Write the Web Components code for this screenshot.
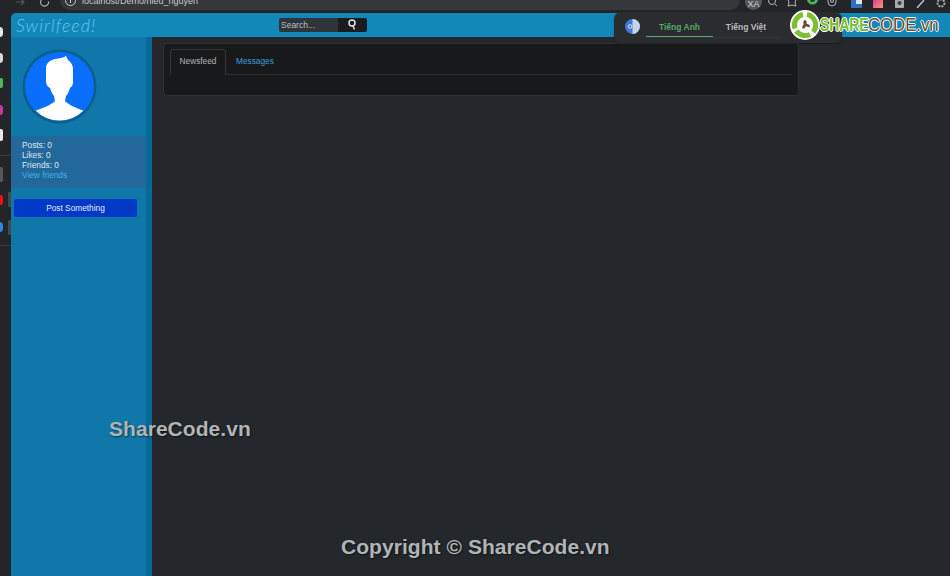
<!DOCTYPE html>
<html>
<head>
<meta charset="utf-8">
<title>Swirlfeed</title>
<style>
  html, body { margin: 0; height: 100%; overflow: hidden; background: #24282c; }
  body { font-family: "Liberation Sans", Arial, sans-serif; }
  .frame { display: grid; grid-template-rows: 13px 1fr; grid-template-columns: 11px 1fr; height: 576px; position: relative; }
  browser-bar { grid-column: 1 / 3; }
</style>
</head>
<body>
<div class="frame">
  <browser-bar></browser-bar>
  <side-rail></side-rail>
  <swirl-app>
    <user-card slot="side" posts="0" likes="0" friends="0"></user-card>
    <feed-tabs slot="main"></feed-tabs>
  </swirl-app>
  <translate-popup></translate-popup>
  <share-logo></share-logo>
  <water-mark style="left:109px;top:417px">ShareCode.vn</water-mark>
  <water-mark style="left:341px;top:535px">Copyright © ShareCode.vn</water-mark>
</div>

<script>
class BrowserBar extends HTMLElement {
  constructor() {
    super();
    this.attachShadow({ mode: 'open' }).innerHTML = `
      <style>
        :host { display: block; height: 13px; background: #232528; overflow: hidden; position: relative; }
        .bar { display: flex; align-items: flex-start; height: 13px; }
        .nav { display: flex; gap: 15px; margin: 0 0 0 15px; width: 45px; flex: none; align-items: center; }
        .url { width: 680px; height: 20px; margin-top: -10px; background: #35373b; border-radius: 10px;
               color: #c8cacc; font-size: 9px; display: flex; align-items: center; padding: 1px 0 0 5px; box-sizing: border-box; flex: none; }
        .url svg { margin-right: 6px; }
        .tools { position: absolute; top: -3px; left: 745px; display: flex; align-items: center; }
        .xa { width: 17px; height: 13px; background: #54565a; border-radius: 0 0 9px 9px; color: #d0d0d0; font-size: 9px; text-align: center; line-height: 14px; margin-right: 6px; }
        .i { display: block; flex: none; }
      </style>
      <div class="bar">
        <div class="nav">
          <svg class="i" width="10" height="8" viewBox="0 0 10 8" fill="none" stroke="#55585c" stroke-width="1.2"><path d="M1 2h8M6 -1l3 3-3 3"/></svg>
          <svg class="i" width="10" height="8" viewBox="0 0 10 8" fill="none" stroke="#b4b6b8" stroke-width="1.1"><path d="M8.500 1.500A4 4 0 1 1 7 -1"/></svg>
        </div>
        <div class="url">
          <svg width="11" height="11" viewBox="0 0 11 11" fill="none" stroke="#c8cacc"><circle cx="5.500" cy="5.500" r="5"/><path d="M5.500 5v3"/></svg>
          <span>localhost/Demo/hieu_nguyen</span>
        </div>
      </div>
      <div class="tools">
        <div class="xa">XA</div>
        <svg class="i" style="margin-right:9px" width="10" height="9" viewBox="0 0 10 9" fill="none" stroke="#b4b6b8"><circle cx="4" cy="2" r="3.500"/><path d="M7 5l2 2"/></svg>
        <svg class="i" style="margin-right:10px" width="10" height="9" viewBox="0 0 10 9" fill="none" stroke="#b4b6b8"><path d="M1 0l1 4-1 3 4-1 4 1-1-3 1-4"/></svg>
        <svg class="i" style="margin-right:9px" width="11" height="9" viewBox="0 0 11 9"><path d="M0 0h11a5.500 5.500 0 0 1-11 0z" fill="#4fb55a"/><path d="M3 0h5a2.500 3 0 0 1-5 0z" fill="#2a2c2f"/></svg>
        <svg class="i" style="margin-right:14px" width="10" height="9" viewBox="0 0 10 9" fill="none" stroke="#b4b6b8"><path d="M1 0v3a4 4 0 0 0 8 0V0"/><circle cx="5" cy="2" r="1.500"/></svg>
        <svg class="i" style="margin-right:11px" width="11" height="9" viewBox="0 0 11 9"><rect width="11" height="9" fill="#2f6fc0"/><rect x="5" width="6" height="5" fill="#d8e4f2"/></svg>
        <svg class="i" style="margin-right:12px" width="10" height="9" viewBox="0 0 10 9"><defs><linearGradient id="g" x1="0" y1="0" x2="1" y2="1"><stop offset="0" stop-color="#e0359a"/><stop offset="1" stop-color="#f59a6a"/></linearGradient></defs><rect width="10" height="9" fill="url(#g)"/></svg>
        <svg class="i" style="margin-right:12px" width="9" height="9" viewBox="0 0 9 9"><rect width="9" height="9" rx="1" fill="#a8aaad"/><circle cx="4.500" cy="4" r="2" fill="#3a3c40"/></svg>
        <svg class="i" style="margin-right:10px" width="10" height="9" viewBox="0 0 10 9" fill="none" stroke="#b8c0d8" stroke-width="1.500"><path d="M1 9L8 1"/></svg>
        <svg class="i" width="10" height="9" viewBox="0 0 10 9"><circle cx="5" cy="4" r="3.500" fill="none" stroke="#a8aaad" stroke-width="2" stroke-dasharray="2 1"/></svg>
      </div>`;
  }
}
customElements.define('browser-bar', BrowserBar);

class SideRail extends HTMLElement {
  constructor() {
    super();
    // top, height, colour, radius of the clipped extension icons
    const spots = [
      [14, 10, '#e8e8e8', 4], [40, 10, '#d8d8d8', 4], [65, 10, '#4fb55a', 2], [92, 10, '#c23aa0', 5],
      [116, 12, '#e8e8e8', 2], [154, 15, '#55575a', 2], [182, 10, '#e01010', 2], [209, 10, '#2a86e0', 5]
    ];
    this.attachShadow({ mode: 'open' }).innerHTML = `
      <style>
        :host { display: block; background: #232528; position: relative; overflow: hidden; }
        b { position: absolute; left: -4px; width: 7px; }
        i { position: absolute; left: 0; right: 0; height: 1px; background: #3a3c3f; }
        u { position: absolute; left: 8px; width: 3px; height: 15px; background: #46484b; border-radius: 1px 0 0 1px; }
      </style>
      ${spots.map(s => `<b style="top:${s[0]}px;height:${s[1]}px;background:${s[2]};border-radius:${s[3]}px"></b>`).join('')}
      <i style="top:142px"></i><i style="top:232px"></i>
      <u style="top:179px"></u><u style="top:207px"></u>`;
  }
}
customElements.define('side-rail', SideRail);

class SwirlApp extends HTMLElement {
  constructor() {
    super();
    this.attachShadow({ mode: 'open' }).innerHTML = `
      <style>
        :host { display: grid; grid-template-rows: 24px 1fr; grid-template-columns: 135px 6px 1fr; min-height: 0; overflow: hidden; background: #24282c; border-top-left-radius: 5px; }
        .top { grid-column: 1 / 4; background: #1288b8; display: flex; align-items: center; position: relative; }
        .brand { font-family: Lato, sans-serif; font-style: italic; font-weight: 300; color: #62c8f0; font-size: 18px; letter-spacing: 1px; margin-left: 5px; width: 263px; flex: none; }
        .search { display: flex; height: 14px; margin-top: -1px; }
        .search span { width: 59px; background: #2e3439; color: #bdbfc1; font-size: 8.500px; line-height: 14px; padding-left: 2px; box-sizing: border-box; border-radius: 2px 0 0 2px; }
        .search button { width: 29px; height: 14px; padding: 0; border: 0; background: #1a1c1f; border-radius: 0 2px 2px 0; display: flex; justify-content: center; align-items: center; }
        .side { background: #0f78a8; }
        .edge { background: #066a97; }
        .main { padding: 6px 0 0 11px; min-width: 0; }
      </style>
      <div class="top">
        <div class="brand">Swirlfeed!</div>
        <div class="search">
          <span>Search...</span>
          <button aria-label="Search"><svg width="11" height="11" viewBox="0 0 11 11" fill="none" stroke="#e4e4e4" stroke-width="1.500"><circle cx="5" cy="4" r="3"/><path d="M6 7l1.500 3.500"/></svg></button>
        </div>
      </div>
      <div class="side"><slot name="side"></slot></div>
      <div class="edge"></div>
      <div class="main"><slot name="main"></slot></div>`;
  }
}
customElements.define('swirl-app', SwirlApp);

class UserCard extends HTMLElement {
  connectedCallback() {
    if (this.shadowRoot) return;
    const a = n => this.getAttribute(n);
    this.attachShadow({ mode: 'open' }).innerHTML = `
      <style>
        :host { display: block; }
        .pic { display: block; margin: 12px 0 0 11px; }
        .stats { margin-top: 12px; height: 52px; background: #23689a; padding: 4px 0 0 11px; box-sizing: border-box; color: #dfe9ef; font-size: 8.300px; line-height: 10px; }
        .stats a { color: #3fb1e6; display: block; }
        .post { display: block; margin: 11px 0 0 3px; width: 123px; height: 18px; border: 0; border-radius: 2px; background: #0038c8; color: #e8ecf6; font: 8.300px "Liberation Sans", Arial, sans-serif; padding: 0; }
      </style>
      <svg class="pic" width="75" height="75" viewBox="0 0 75 75">
        <defs><clipPath id="c"><circle cx="37.500" cy="37.500" r="34"/></clipPath></defs>
        <circle cx="37.500" cy="37.500" r="37" fill="#0b5f8c"/>
        <circle cx="37.500" cy="37.500" r="34.500" fill="#0a6fff"/>
        <path clip-path="url(#c)" fill="#fff" d="M24 18C25 13 29 11 33 10C38 9 41 9 44 7L46 11C49 13 51 16 51 20L51 33C51 37 49 38 48 39C47 43 45 46 44 47L43 52C47 56 54 59 62 62L62 80H13V62C21 59 29 56 33 52L32 47C30 45 29 42 28 39C26 38 24 36 24 32Z"/>
      </svg>
      <div class="stats">
        <div>Posts: ${a('posts')}</div>
        <div>Likes: ${a('likes')}</div>
        <div>Friends: ${a('friends')}</div>
        <a>View friends</a>
      </div>
      <button class="post">Post Something</button>`;
  }
}
customElements.define('user-card', UserCard);

class FeedTabs extends HTMLElement {
  constructor() {
    super();
    this.attachShadow({ mode: 'open' }).innerHTML = `
      <style>
        :host { display: block; width: 636px; height: 53px; box-sizing: border-box; background: #18191b; border: 1px solid #2e3134; border-radius: 4px; padding: 5px 6px 0 6px; }
        .tabs { display: flex; height: 25px; border-bottom: 1px solid #2e3134; font-size: 8.300px; }
        .tab { box-sizing: border-box; height: 26px; line-height: 23px; }
        .on { width: 56px; border: 1px solid #33363a; border-bottom-color: #18191b; border-radius: 3px 3px 0 0; color: #b4b5b6; text-align: center; }
        .off { color: #3f9fd6; margin-left: 10px; line-height: 25px; }
      </style>
      <div class="tabs">
        <div class="tab on">Newsfeed</div>
        <div class="tab off">Messages</div>
      </div>`;
  }
}
customElements.define('feed-tabs', FeedTabs);

class TranslatePopup extends HTMLElement {
  constructor() {
    super();
    this.attachShadow({ mode: 'open' }).innerHTML = `
      <style>
        :host { position: absolute; left: 614px; top: 12px; width: 228px; height: 31px; box-sizing: border-box; background: #2a2c2f; border-radius: 7px; display: flex; align-items: flex-start; padding: 0 0 0 11px; box-shadow: 0 1px 2px rgba(0,0,0,.3); }
        svg { margin: 7px 6px 0 0; flex: none; }
        .opts { display: flex; width: 136px; border-bottom: 1px solid #333538; height: 25px; font-size: 8.500px; font-weight: bold; line-height: 30px; }
        .opts div { text-align: center; box-sizing: border-box; height: 25px; color: #b9bbbd; }
        .opts .on { width: 67px; color: #55a868; border-bottom: 1px solid #55a868; }
        .opts .off { width: 66px; }
      </style>
      <svg width="15" height="15" viewBox="0 0 15 15"><circle cx="7.500" cy="7.500" r="7.500" fill="#3f78d8"/><path d="M7.500 0a7.500 7.500 0 0 1 0 15z" fill="#c9d3e6"/><circle cx="5" cy="7.500" r="1.800" fill="none" stroke="#e8eef8"/></svg>
      <div class="opts">
        <div class="on">Tiếng Anh</div>
        <div class="off">Tiếng Việt</div>
      </div>`;
  }
}
customElements.define('translate-popup', TranslatePopup);

class ShareLogo extends HTMLElement {
  constructor() {
    super();
    this.attachShadow({ mode: 'open' }).innerHTML = `
      <style>
        :host { position: absolute; left: 790px; top: 10px; height: 30px; width: 152px; display: flex; align-items: center; }
        svg { flex: none; }
        .w { display: block; flex: none; transform-origin: left center; white-space: nowrap; font: 19px "Liberation Sans", Arial, sans-serif; }
        .s { width: 48px; transform: scaleX(.73); font-weight: bold; color: #7dbf2e; text-shadow: 1.500px 0 #fff, -1.500px 0 #fff, 0 1px #fff, 0 -1px #fff; }
        .c { width: 72px; transform: scaleX(.88); color: #6b4a2c; text-shadow: 1px 0 #fff, -1px 0 #fff, 0 1px #fff, 0 -1px #fff; }
      </style>
      <svg width="30" height="30" viewBox="0 0 30 30">
        <circle cx="15" cy="15" r="15" fill="#fff"/>
        <g fill="none" stroke="#7dbf2e" stroke-width="5">
          <path d="M17 4.500A10.700 10.700 0 0 1 23 22"/>
          <path d="M20 24.500A10.700 10.700 0 0 1 6.500 21"/>
          <path d="M5 18.500A10.700 10.700 0 0 1 13 4.500"/>
        </g>
        <path fill="#6b4a2c" transform="translate(3 3) scale(.8)" d="M15 8.500c2 1.500 2.500 3.500 2 5.200 2-.300 4 .700 4.500 3.500-2 .800-4 .300-5.300-1 -.500 2-2 3.300-4.200 3.500-.800-2.500 0-4.500 1.700-5.500-1.500-1.500-1-4 1.300-5.700z"/>
      </svg>
      <span class="w s">SHARE</span>
      <span class="w c">CODE.vn</span>`;
  }
}
customElements.define('share-logo', ShareLogo);

class WaterMark extends HTMLElement {
  constructor() {
    super();
    this.attachShadow({ mode: 'open' }).innerHTML = `
      <style>
        :host { position: absolute; font-family: "Liberation Sans", Arial, sans-serif; font-weight: bold; font-size: 21px; letter-spacing: .05px; color: #b0b4b6; line-height: 23px; white-space: nowrap; text-shadow: 1px 1px 2px rgba(0,0,0,.55); }
      </style>
      <slot></slot>`;
  }
}
customElements.define('water-mark', WaterMark);
</script>
</body>
</html>
